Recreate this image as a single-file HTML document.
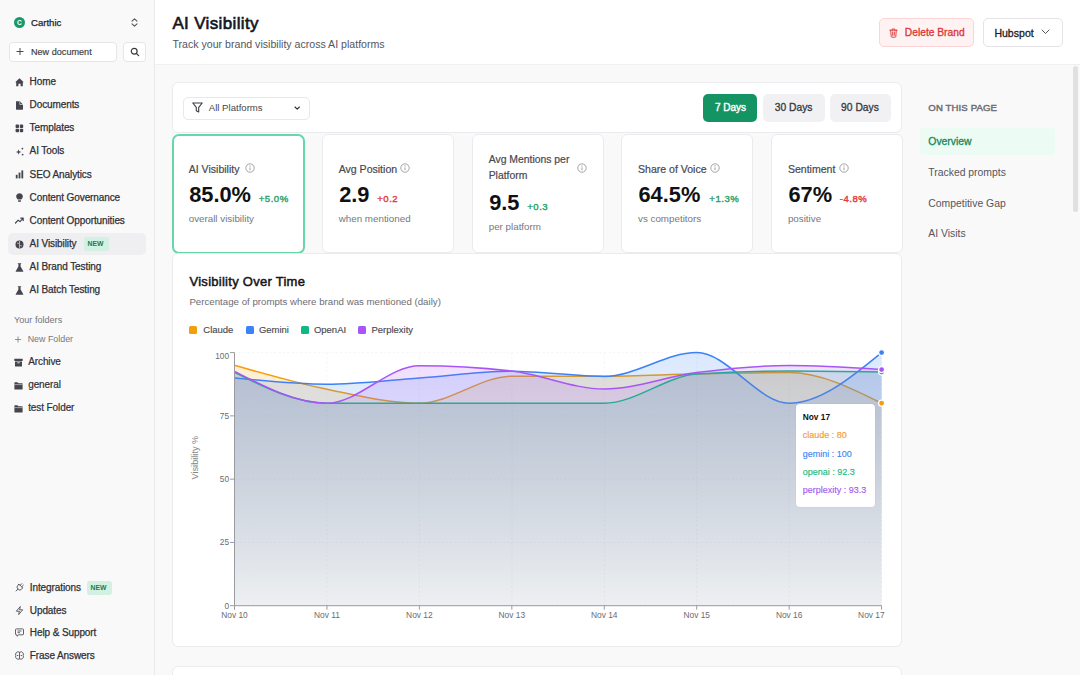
<!DOCTYPE html>
<html><head><meta charset="utf-8"><style>
html,body{margin:0;padding:0;width:1080px;height:675px;overflow:hidden;background:#f9f9fa;font-family:"Liberation Sans", sans-serif;}
.t{position:absolute;white-space:nowrap;}
.r{position:absolute;}
.i{position:absolute;overflow:visible;}
</style></head><body>
<div class="r" style="left:0px;top:0px;width:154px;height:675px;background:#f9f9fa;"></div>
<div class="r" style="left:154px;top:0px;width:1px;height:675px;background:#e9e9ee;"></div>
<div class="r" style="left:14px;top:17px;width:11px;height:11px;background:#17996a;border-radius:6px;"></div>
<div class="t" style="left:17.00px;top:19.61px;font-size:6.6px;line-height:6.6px;color:#fff;font-weight:700;">C</div>
<div class="t" style="left:31.00px;top:17.87px;font-size:9.6px;line-height:9.6px;color:#232329;-webkit-text-stroke:0.25px #232329;">Carthic</div>
<svg class="i" style="left:131px;top:18px;" width="7" height="9" viewBox="0 0 7 9"><path d="M1 3.2 L3.5 0.8 L6 3.2 M1 5.8 L3.5 8.2 L6 5.8" fill="none" stroke="#55555c" stroke-width="1.1" stroke-linecap="round" stroke-linejoin="round"/></svg>
<div class="r" style="left:9px;top:42px;width:108px;height:19.5px;background:#fff;box-sizing:border-box;border:1px solid #e6e6ea;border-radius:4px;"></div>
<svg class="i" style="left:16px;top:47px;" width="8" height="9" viewBox="0 0 8 9"><path d="M4 1 V8 M0.5 4.5 H7.5" fill="none" stroke="#4a4a52" stroke-width="1"/></svg>
<div class="t" style="left:31.00px;top:48.10px;font-size:9.1px;line-height:9.1px;color:#3a3a40;-webkit-text-stroke:0.15px #3a3a40;">New document</div>
<div class="r" style="left:123px;top:42px;width:23px;height:19.5px;background:#fff;box-sizing:border-box;border:1px solid #e6e6ea;border-radius:4px;"></div>
<svg class="i" style="left:130px;top:47px;" width="10" height="10" viewBox="0 0 10 10"><circle cx="4.2" cy="4.2" r="2.9" fill="none" stroke="#3a3a40" stroke-width="1.2"/><path d="M6.4 6.4 L8.6 8.6" stroke="#3a3a40" stroke-width="1.3" stroke-linecap="round"/></svg>
<div class="r" style="left:8px;top:233px;width:138px;height:22px;background:#efeff1;border-radius:5px;"></div>
<div class="t" style="left:29.60px;top:77.03px;font-size:10.0px;line-height:10.0px;color:#303036;letter-spacing:-0.1px;-webkit-text-stroke:0.25px #303036;">Home</div>
<svg class="i" style="left:14.5px;top:77.5px;" width="9" height="9" viewBox="0 0 9 9"><path d="M4.5 0.3 L8.8 4.2 L7.8 4.2 L7.8 8.2 L5.6 8.2 L5.6 5.8 L3.4 5.8 L3.4 8.2 L1.2 8.2 L1.2 4.2 L0.2 4.2 Z" fill="#45454d"/></svg>
<div class="t" style="left:29.60px;top:100.19px;font-size:10.0px;line-height:10.0px;color:#303036;letter-spacing:-0.1px;-webkit-text-stroke:0.25px #303036;">Documents</div>
<svg class="i" style="left:14.5px;top:100.65px;" width="9" height="9" viewBox="0 0 9 9"><path d="M1 0.3 H4.8 L8 3.5 V8.3 Q8 8.7 7.6 8.7 H1.4 Q1 8.7 1 8.3 Z" fill="#45454d"/><path d="M4.8 0.3 V3.5 H8" fill="none" stroke="#f9f9fa" stroke-width="0.6"/></svg>
<div class="t" style="left:29.60px;top:123.34px;font-size:10.0px;line-height:10.0px;color:#303036;letter-spacing:-0.1px;-webkit-text-stroke:0.25px #303036;">Templates</div>
<svg class="i" style="left:14.5px;top:123.80000000000001px;" width="9" height="9" viewBox="0 0 9 9"><rect x="0.6" y="0.6" width="3.4" height="3.4" rx="0.8" fill="#45454d"/><rect x="0.6" y="4.8" width="3.4" height="3.4" rx="0.8" fill="#45454d"/><rect x="4.8" y="0.6" width="3.4" height="3.4" rx="0.8" fill="#45454d"/><rect x="4.8" y="4.8" width="3.4" height="3.4" rx="0.8" fill="#45454d"/></svg>
<div class="t" style="left:29.60px;top:146.48px;font-size:10.0px;line-height:10.0px;color:#303036;letter-spacing:-0.1px;-webkit-text-stroke:0.25px #303036;">AI Tools</div>
<svg class="i" style="left:14.5px;top:146.95px;" width="9" height="9" viewBox="0 0 9 9"><path d="M3.6 2.2 L4.3 4.3 L6.4 5 L4.3 5.7 L3.6 7.8 L2.9 5.7 L0.8 5 L2.9 4.3 Z" fill="#45454d"/><circle cx="7.4" cy="1.6" r="0.9" fill="#45454d"/><circle cx="7.6" cy="7.6" r="0.9" fill="#45454d"/></svg>
<div class="t" style="left:29.60px;top:169.63px;font-size:10.0px;line-height:10.0px;color:#303036;letter-spacing:-0.1px;-webkit-text-stroke:0.25px #303036;">SEO Analytics</div>
<svg class="i" style="left:14.5px;top:170.1px;" width="9" height="9" viewBox="0 0 9 9"><rect x="0.8" y="4.8" width="1.8" height="3.6" fill="#45454d"/><rect x="3.6" y="2.6" width="1.8" height="5.8" fill="#45454d"/><rect x="6.4" y="0.4" width="1.8" height="8" fill="#45454d"/></svg>
<div class="t" style="left:29.60px;top:192.78px;font-size:10.0px;line-height:10.0px;color:#303036;letter-spacing:-0.1px;-webkit-text-stroke:0.25px #303036;">Content Governance</div>
<svg class="i" style="left:14.5px;top:193.25px;" width="9" height="9" viewBox="0 0 9 9"><path d="M4.5 0.2 A3.3 3.3 0 0 1 7.1 5.6 L6.2 6.6 H2.8 L1.9 5.6 A3.3 3.3 0 0 1 4.5 0.2 Z" fill="#45454d"/><rect x="3" y="7.2" width="3" height="1.5" rx="0.5" fill="#45454d"/></svg>
<div class="t" style="left:29.60px;top:215.93px;font-size:10.0px;line-height:10.0px;color:#303036;letter-spacing:-0.1px;-webkit-text-stroke:0.25px #303036;">Content Opportunities</div>
<svg class="i" style="left:14.5px;top:216.39999999999998px;" width="9" height="9" viewBox="0 0 9 9"><path d="M0.5 7 L3.2 4.2 L5 5.6 L8 2.3 M5.8 2.2 H8.2 V4.6" fill="none" stroke="#45454d" stroke-width="1.2" stroke-linecap="round" stroke-linejoin="round"/></svg>
<div class="t" style="left:29.60px;top:239.08px;font-size:10.0px;line-height:10.0px;color:#303036;letter-spacing:-0.1px;-webkit-text-stroke:0.25px #303036;">AI Visibility</div>
<svg class="i" style="left:14.5px;top:239.54999999999998px;" width="9" height="9" viewBox="0 0 9 9"><circle cx="4.5" cy="4.5" r="4" fill="#45454d"/><path d="M4.5 1 V8 M2 3 Q3.3 3.8 4.5 3.2 M7 6 Q5.7 5.2 4.5 5.8" fill="none" stroke="#efeff1" stroke-width="0.6"/></svg>
<div class="t" style="left:29.60px;top:262.24px;font-size:10.0px;line-height:10.0px;color:#303036;letter-spacing:-0.1px;-webkit-text-stroke:0.25px #303036;">AI Brand Testing</div>
<svg class="i" style="left:14.5px;top:262.7px;" width="9" height="9" viewBox="0 0 9 9"><path d="M2.8 0.3 H6.2 V1.1 H5.6 V3.6 L8.3 8.2 Q8.5 8.7 8 8.7 H1 Q0.5 8.7 0.7 8.2 L3.4 3.6 V1.1 H2.8 Z" fill="#45454d"/></svg>
<div class="t" style="left:29.60px;top:285.39px;font-size:10.0px;line-height:10.0px;color:#303036;letter-spacing:-0.1px;-webkit-text-stroke:0.25px #303036;">AI Batch Testing</div>
<svg class="i" style="left:14.5px;top:285.85px;" width="9" height="9" viewBox="0 0 9 9"><path d="M2.8 0.3 H6.2 V1.1 H5.6 V3.6 L8.3 8.2 Q8.5 8.7 8 8.7 H1 Q0.5 8.7 0.7 8.2 L3.4 3.6 V1.1 H2.8 Z" fill="#45454d"/></svg>
<div class="r" style="left:84px;top:237px;width:25px;height:13.5px;background:#d3f1e2;border-radius:3px;"></div>
<div class="t" style="left:87.40px;top:241.04px;font-size:6.8px;line-height:6.8px;color:#1b7a50;font-weight:700;letter-spacing:0.1px;">NEW</div>
<div class="t" style="left:14.00px;top:315.60px;font-size:9.1px;line-height:9.1px;color:#75757c;">Your folders</div>
<svg class="i" style="left:15px;top:336px;" width="6" height="7" viewBox="0 0 6 7"><path d="M3 0.5 V6.5 M0 3.5 H6" stroke="#85858c" stroke-width="0.9"/></svg>
<div class="t" style="left:27.70px;top:334.67px;font-size:8.9px;line-height:8.9px;color:#77777e;">New Folder</div>
<div class="t" style="left:28.20px;top:357.34px;font-size:10.0px;line-height:10.0px;color:#303036;letter-spacing:-0.1px;-webkit-text-stroke:0.2px #303036;">Archive</div>
<svg class="i" style="left:13.9px;top:357.8px;" width="9" height="9" viewBox="0 0 9 9"><rect x="0.3" y="0.8" width="8.4" height="2.2" rx="0.4" fill="#45454d"/><path d="M1 3.5 H8 V8 Q8 8.5 7.5 8.5 H1.5 Q1 8.5 1 8 Z" fill="#45454d"/><rect x="3.3" y="4.4" width="2.4" height="0.9" fill="#f9f9fa"/></svg>
<div class="t" style="left:28.20px;top:380.14px;font-size:10.0px;line-height:10.0px;color:#303036;letter-spacing:-0.1px;-webkit-text-stroke:0.2px #303036;">general</div>
<svg class="i" style="left:13.9px;top:380.6px;" width="9" height="9" viewBox="0 0 9 9"><path d="M0.4 1.8 Q0.4 1.3 0.9 1.3 H3.4 L4.4 2.3 H8.1 Q8.6 2.3 8.6 2.8 V7.9 Q8.6 8.4 8.1 8.4 H0.9 Q0.4 8.4 0.4 7.9 Z" fill="#45454d"/><path d="M0.4 3.6 H8.6" stroke="#f9f9fa" stroke-width="0.5"/></svg>
<div class="t" style="left:28.20px;top:403.34px;font-size:10.0px;line-height:10.0px;color:#303036;letter-spacing:-0.1px;-webkit-text-stroke:0.2px #303036;">test Folder</div>
<svg class="i" style="left:13.9px;top:403.8px;" width="9" height="9" viewBox="0 0 9 9"><path d="M0.4 1.8 Q0.4 1.3 0.9 1.3 H3.4 L4.4 2.3 H8.1 Q8.6 2.3 8.6 2.8 V7.9 Q8.6 8.4 8.1 8.4 H0.9 Q0.4 8.4 0.4 7.9 Z" fill="#45454d"/><path d="M0.4 3.6 H8.6" stroke="#f9f9fa" stroke-width="0.5"/></svg>
<div class="t" style="left:29.80px;top:583.03px;font-size:10.0px;line-height:10.0px;color:#303036;letter-spacing:-0.1px;-webkit-text-stroke:0.25px #303036;">Integrations</div>
<svg class="i" style="left:14.5px;top:583.0px;" width="9" height="9" viewBox="0 0 9 9"><g transform="rotate(45 4.5 4.5)"><path d="M3.4 0.2 V2.3 M5.6 0.2 V2.3 M1.9 2.5 H7.1 V4.6 Q7.1 6.6 5.1 6.6 H3.9 Q1.9 6.6 1.9 4.6 Z M4.5 6.6 V9.4" fill="none" stroke="#505058" stroke-width="0.9" stroke-linecap="round" stroke-linejoin="round"/></g></svg>
<div class="t" style="left:29.80px;top:605.74px;font-size:10.0px;line-height:10.0px;color:#303036;letter-spacing:-0.1px;-webkit-text-stroke:0.25px #303036;">Updates</div>
<svg class="i" style="left:14.5px;top:605.7px;" width="9" height="9" viewBox="0 0 9 9"><path d="M5.3 0.5 L1.3 5.2 H4.4 L3.7 8.6 L7.7 3.8 H4.6 Z" fill="none" stroke="#505058" stroke-width="0.9" stroke-linejoin="round"/></svg>
<div class="t" style="left:29.80px;top:628.13px;font-size:10.0px;line-height:10.0px;color:#303036;letter-spacing:-0.1px;-webkit-text-stroke:0.25px #303036;">Help &amp; Support</div>
<svg class="i" style="left:14.5px;top:628.1px;" width="9" height="9" viewBox="0 0 9 9"><path d="M1.2 0.9 H7.8 Q8.5 0.9 8.5 1.6 V6.1 Q8.5 6.8 7.8 6.8 H3.6 L2 8.3 V6.8 H1.2 Q0.5 6.8 0.5 6.1 V1.6 Q0.5 0.9 1.2 0.9 Z M2.5 3 H6.5 M2.5 4.7 H5" fill="none" stroke="#505058" stroke-width="0.9" stroke-linejoin="round"/></svg>
<div class="t" style="left:29.80px;top:650.53px;font-size:10.0px;line-height:10.0px;color:#303036;letter-spacing:-0.1px;-webkit-text-stroke:0.25px #303036;">Frase Answers</div>
<svg class="i" style="left:14.5px;top:650.5px;" width="9" height="9" viewBox="0 0 9 9"><path d="M4.5 1.3 Q2.5 0 1.3 1.6 Q0.1 3 0.8 4.5 Q0 6.3 1.5 7.6 Q3 8.8 4.5 7.8 Q6 8.8 7.5 7.6 Q9 6.3 8.2 4.5 Q8.9 3 7.7 1.6 Q6.5 0 4.5 1.3 Z M4.5 1.3 V7.8 M2 4.5 H3.3 M5.7 4.5 H7" fill="none" stroke="#505058" stroke-width="0.9" stroke-linejoin="round"/></svg>
<div class="r" style="left:87px;top:581px;width:25px;height:13.5px;background:#d3f1e2;border-radius:3px;"></div>
<div class="t" style="left:90.40px;top:585.04px;font-size:6.8px;line-height:6.8px;color:#1b7a50;font-weight:700;letter-spacing:0.1px;">NEW</div>
<div class="r" style="left:155px;top:0px;width:925px;height:64px;background:#fff;"></div>
<div class="r" style="left:155px;top:64px;width:925px;height:1px;background:#f0f0f3;"></div>
<div class="r" style="left:155px;top:65px;width:925px;height:610px;background:#f9f9fa;"></div>
<div class="t" style="left:172.40px;top:14.81px;font-size:17.0px;line-height:17.0px;color:#141418;letter-spacing:0.35px;-webkit-text-stroke:0.6px #141418;">AI Visibility</div>
<div class="t" style="left:172.50px;top:38.83px;font-size:10.6px;line-height:10.6px;color:#55555d;">Track your brand visibility across AI platforms</div>
<div class="r" style="left:879px;top:18px;width:95px;height:29px;background:#fef2f2;box-sizing:border-box;border:1px solid #fbd5d5;border-radius:5px;"></div>
<svg class="i" style="left:889px;top:27.5px;" width="9" height="10" viewBox="0 0 9 10"><path d="M0.8 2.2 H8.2 M3.2 2.2 V1 H5.8 V2.2 M1.7 2.2 L2.2 8.6 Q2.3 9.2 2.9 9.2 H6.1 Q6.7 9.2 6.8 8.6 L7.3 2.2 M3.7 4 V7.4 M5.3 4 V7.4" fill="none" stroke="#dc3b3b" stroke-width="0.95" stroke-linecap="round" stroke-linejoin="round"/></svg>
<div class="t" style="left:904.80px;top:27.72px;font-size:10.25px;line-height:10.25px;color:#dc3535;-webkit-text-stroke:0.3px #dc3535;">Delete Brand</div>
<div class="r" style="left:982.5px;top:18px;width:80.5px;height:29px;background:#fff;box-sizing:border-box;border:1px solid #e3e3e8;border-radius:5px;"></div>
<div class="t" style="left:994.40px;top:27.57px;font-size:10.55px;line-height:10.55px;color:#1c1c22;-webkit-text-stroke:0.3px #1c1c22;">Hubspot</div>
<svg class="i" style="left:1041px;top:29px;" width="9" height="6" viewBox="0 0 9 6"><path d="M1 1 L4.5 4.5 L8 1" fill="none" stroke="#55555c" stroke-width="1" stroke-linecap="round" stroke-linejoin="round"/></svg>
<div class="r" style="left:172px;top:82px;width:730px;height:50.5px;background:#fff;box-sizing:border-box;border:1px solid #ebebef;border-radius:6px;"></div>
<div class="r" style="left:183px;top:97px;width:127px;height:22.5px;background:#fff;box-sizing:border-box;border:1px solid #e8e8ec;border-radius:5px;"></div>
<svg class="i" style="left:191.5px;top:102px;" width="11" height="11" viewBox="0 0 11 11"><path d="M0.8 1 H10.2 L6.7 5.3 V10 L4.3 8.7 V5.3 Z" fill="none" stroke="#3d3d44" stroke-width="1.1" stroke-linejoin="round"/></svg>
<div class="t" style="left:208.80px;top:103.27px;font-size:9.6px;line-height:9.6px;color:#47474e;">All Platforms</div>
<svg class="i" style="left:293.8px;top:106px;" width="7" height="5" viewBox="0 0 7 5"><path d="M1 1 L3.2 3.2 L5.4 1" fill="none" stroke="#2c2c32" stroke-width="1.1" stroke-linecap="round" stroke-linejoin="round"/></svg>
<div class="r" style="left:703px;top:94px;width:54px;height:28px;background:#149462;border-radius:5px;"></div>
<div class="t" style="left:714.90px;top:103.44px;font-size:10.0px;line-height:10.0px;color:#fff;-webkit-text-stroke:0.4px #fff;">7 Days</div>
<div class="r" style="left:763px;top:94px;width:61.5px;height:28px;background:#f1f1f3;border-radius:5px;"></div>
<div class="t" style="left:774.70px;top:103.18px;font-size:10.3px;line-height:10.3px;color:#38383e;-webkit-text-stroke:0.3px #38383e;">30 Days</div>
<div class="r" style="left:830px;top:94px;width:61px;height:28px;background:#f1f1f3;border-radius:5px;"></div>
<div class="t" style="left:841.10px;top:103.18px;font-size:10.3px;line-height:10.3px;color:#38383e;-webkit-text-stroke:0.3px #38383e;">90 Days</div>
<div class="r" style="left:171.5px;top:133.5px;width:133px;height:120px;background:#fff;box-sizing:border-box;border:2px solid #66d7ab;border-radius:7px;"></div>
<div class="t" style="left:188.70px;top:163.67px;font-size:10.55px;line-height:10.55px;color:#48484f;-webkit-text-stroke:0.2px #48484f;">AI Visibility</div>
<svg class="i" style="left:245.2px;top:163px;" width="10" height="10" viewBox="0 0 10 10"><circle cx="5" cy="5" r="4.2" fill="none" stroke="#9a9aa0" stroke-width="0.9"/><path d="M5 4.4 V7.2" stroke="#9a9aa0" stroke-width="0.95"/><circle cx="5" cy="2.9" r="0.55" fill="#9a9aa0"/></svg>
<div class="t" style="left:189.20px;top:184.05px;font-size:21.8px;line-height:21.8px;color:#111114;font-weight:700;">85.0%</div>
<div class="t" style="left:258.70px;top:194.17px;font-size:9.6px;line-height:9.6px;color:#2aa36b;letter-spacing:0.5px;-webkit-text-stroke:0.4px #2aa36b;">+5.0%</div>
<div class="t" style="left:188.70px;top:213.90px;font-size:9.8px;line-height:9.8px;color:#77777e;">overall visibility</div>
<div class="r" style="left:321.5px;top:134px;width:132px;height:119px;background:#fff;box-sizing:border-box;border:1px solid #ebebef;border-radius:6px;"></div>
<div class="t" style="left:338.70px;top:163.67px;font-size:10.55px;line-height:10.55px;color:#48484f;-webkit-text-stroke:0.2px #48484f;">Avg Position</div>
<svg class="i" style="left:400.29999999999995px;top:163px;" width="10" height="10" viewBox="0 0 10 10"><circle cx="5" cy="5" r="4.2" fill="none" stroke="#9a9aa0" stroke-width="0.9"/><path d="M5 4.4 V7.2" stroke="#9a9aa0" stroke-width="0.95"/><circle cx="5" cy="2.9" r="0.55" fill="#9a9aa0"/></svg>
<div class="t" style="left:339.20px;top:184.05px;font-size:21.8px;line-height:21.8px;color:#111114;font-weight:700;">2.9</div>
<div class="t" style="left:377.20px;top:194.17px;font-size:9.6px;line-height:9.6px;color:#e23b3b;letter-spacing:0.5px;-webkit-text-stroke:0.4px #e23b3b;">+0.2</div>
<div class="t" style="left:338.70px;top:213.90px;font-size:9.8px;line-height:9.8px;color:#77777e;">when mentioned</div>
<div class="r" style="left:471.5px;top:134px;width:132px;height:119px;background:#fff;box-sizing:border-box;border:1px solid #ebebef;border-radius:6px;"></div>
<div class="t" style="left:488.70px;top:154.90px;font-size:10.4px;line-height:10.4px;color:#48484f;-webkit-text-stroke:0.2px #48484f;">Avg Mentions per</div>
<div class="t" style="left:488.70px;top:171.30px;font-size:10.4px;line-height:10.4px;color:#48484f;-webkit-text-stroke:0.2px #48484f;">Platform</div>
<svg class="i" style="left:576.5px;top:163px;" width="10" height="10" viewBox="0 0 10 10"><circle cx="5" cy="5" r="4.2" fill="none" stroke="#9a9aa0" stroke-width="0.9"/><path d="M5 4.4 V7.2" stroke="#9a9aa0" stroke-width="0.95"/><circle cx="5" cy="2.9" r="0.55" fill="#9a9aa0"/></svg>
<div class="t" style="left:489.20px;top:192.05px;font-size:21.8px;line-height:21.8px;color:#111114;font-weight:700;">9.5</div>
<div class="t" style="left:527.20px;top:202.17px;font-size:9.6px;line-height:9.6px;color:#2aa36b;letter-spacing:0.5px;-webkit-text-stroke:0.4px #2aa36b;">+0.3</div>
<div class="t" style="left:488.70px;top:222.00px;font-size:9.8px;line-height:9.8px;color:#77777e;">per platform</div>
<div class="r" style="left:620.8px;top:134px;width:132px;height:119px;background:#fff;box-sizing:border-box;border:1px solid #ebebef;border-radius:6px;"></div>
<div class="t" style="left:638.00px;top:163.67px;font-size:10.55px;line-height:10.55px;color:#48484f;-webkit-text-stroke:0.2px #48484f;">Share of Voice</div>
<svg class="i" style="left:710.2px;top:163px;" width="10" height="10" viewBox="0 0 10 10"><circle cx="5" cy="5" r="4.2" fill="none" stroke="#9a9aa0" stroke-width="0.9"/><path d="M5 4.4 V7.2" stroke="#9a9aa0" stroke-width="0.95"/><circle cx="5" cy="2.9" r="0.55" fill="#9a9aa0"/></svg>
<div class="t" style="left:638.50px;top:184.05px;font-size:21.8px;line-height:21.8px;color:#111114;font-weight:700;">64.5%</div>
<div class="t" style="left:709.30px;top:194.17px;font-size:9.6px;line-height:9.6px;color:#2aa36b;letter-spacing:0.5px;-webkit-text-stroke:0.4px #2aa36b;">+1.3%</div>
<div class="t" style="left:638.00px;top:213.90px;font-size:9.8px;line-height:9.8px;color:#77777e;">vs competitors</div>
<div class="r" style="left:770.7px;top:134px;width:132px;height:119px;background:#fff;box-sizing:border-box;border:1px solid #ebebef;border-radius:6px;"></div>
<div class="t" style="left:787.90px;top:163.67px;font-size:10.55px;line-height:10.55px;color:#48484f;-webkit-text-stroke:0.2px #48484f;">Sentiment</div>
<svg class="i" style="left:839.4000000000001px;top:163px;" width="10" height="10" viewBox="0 0 10 10"><circle cx="5" cy="5" r="4.2" fill="none" stroke="#9a9aa0" stroke-width="0.9"/><path d="M5 4.4 V7.2" stroke="#9a9aa0" stroke-width="0.95"/><circle cx="5" cy="2.9" r="0.55" fill="#9a9aa0"/></svg>
<div class="t" style="left:788.40px;top:184.05px;font-size:21.8px;line-height:21.8px;color:#111114;font-weight:700;">67%</div>
<div class="t" style="left:839.80px;top:194.17px;font-size:9.6px;line-height:9.6px;color:#e23b3b;letter-spacing:0.5px;-webkit-text-stroke:0.4px #e23b3b;">-4.8%</div>
<div class="t" style="left:787.90px;top:213.90px;font-size:9.8px;line-height:9.8px;color:#77777e;">positive</div>
<div class="r" style="left:172px;top:253px;width:730px;height:394px;background:#fff;box-sizing:border-box;border:1px solid #ebebef;border-radius:6px;"></div>
<div class="t" style="left:189.50px;top:274.80px;font-size:13.0px;line-height:13.0px;color:#16161a;letter-spacing:0.27px;-webkit-text-stroke:0.5px #16161a;">Visibility Over Time</div>
<div class="t" style="left:189.40px;top:296.59px;font-size:9.7px;line-height:9.7px;color:#6d6d74;">Percentage of prompts where brand was mentioned (daily)</div>
<div class="r" style="left:189.4px;top:326px;width:8px;height:8px;background:#f59e0b;border-radius:1.5px;"></div>
<div class="t" style="left:203.30px;top:324.96px;font-size:9.5px;line-height:9.5px;color:#4a4a51;-webkit-text-stroke:0.15px #4a4a51;">Claude</div>
<div class="r" style="left:245.6px;top:326px;width:8px;height:8px;background:#3b82f6;border-radius:1.5px;"></div>
<div class="t" style="left:258.90px;top:324.96px;font-size:9.5px;line-height:9.5px;color:#4a4a51;-webkit-text-stroke:0.15px #4a4a51;">Gemini</div>
<div class="r" style="left:300.6px;top:326px;width:8px;height:8px;background:#10b981;border-radius:1.5px;"></div>
<div class="t" style="left:313.90px;top:324.96px;font-size:9.5px;line-height:9.5px;color:#4a4a51;-webkit-text-stroke:0.15px #4a4a51;">OpenAI</div>
<div class="r" style="left:358px;top:326px;width:8px;height:8px;background:#a855f7;border-radius:1.5px;"></div>
<div class="t" style="left:371.40px;top:324.96px;font-size:9.5px;line-height:9.5px;color:#4a4a51;-webkit-text-stroke:0.15px #4a4a51;">Perplexity</div>
<svg class="i" style="left:0;top:0" width="1080" height="675" viewBox="0 0 1080 675"><defs><linearGradient id="g_claude" x1="0" y1="0" x2="0" y2="1"><stop offset="0" stop-color="#f59e0b" stop-opacity="0.18"/><stop offset="1" stop-color="#f59e0b" stop-opacity="0.035"/></linearGradient><linearGradient id="g_gemini" x1="0" y1="0" x2="0" y2="1"><stop offset="0" stop-color="#3b82f6" stop-opacity="0.18"/><stop offset="1" stop-color="#3b82f6" stop-opacity="0.035"/></linearGradient><linearGradient id="g_openai" x1="0" y1="0" x2="0" y2="1"><stop offset="0" stop-color="#10b981" stop-opacity="0.18"/><stop offset="1" stop-color="#10b981" stop-opacity="0.035"/></linearGradient><linearGradient id="g_perplexity" x1="0" y1="0" x2="0" y2="1"><stop offset="0" stop-color="#a855f7" stop-opacity="0.18"/><stop offset="1" stop-color="#a855f7" stop-opacity="0.035"/></linearGradient></defs><line x1="234.5" x2="881.6" y1="605.70" y2="605.70" stroke="#f1f1f3" stroke-dasharray="2.2 2.2" stroke-width="0.8"/><line x1="234.5" x2="881.6" y1="542.43" y2="542.43" stroke="#f1f1f3" stroke-dasharray="2.2 2.2" stroke-width="0.8"/><line x1="234.5" x2="881.6" y1="479.15" y2="479.15" stroke="#f1f1f3" stroke-dasharray="2.2 2.2" stroke-width="0.8"/><line x1="234.5" x2="881.6" y1="415.88" y2="415.88" stroke="#f1f1f3" stroke-dasharray="2.2 2.2" stroke-width="0.8"/><line x1="234.5" x2="881.6" y1="352.60" y2="352.60" stroke="#f1f1f3" stroke-dasharray="2.2 2.2" stroke-width="0.8"/><line x1="234.50" x2="234.50" y1="352.6" y2="605.7" stroke="#f1f1f3" stroke-dasharray="2.2 2.2" stroke-width="0.8"/><line x1="326.94" x2="326.94" y1="352.6" y2="605.7" stroke="#f1f1f3" stroke-dasharray="2.2 2.2" stroke-width="0.8"/><line x1="419.39" x2="419.39" y1="352.6" y2="605.7" stroke="#f1f1f3" stroke-dasharray="2.2 2.2" stroke-width="0.8"/><line x1="511.83" x2="511.83" y1="352.6" y2="605.7" stroke="#f1f1f3" stroke-dasharray="2.2 2.2" stroke-width="0.8"/><line x1="604.27" x2="604.27" y1="352.6" y2="605.7" stroke="#f1f1f3" stroke-dasharray="2.2 2.2" stroke-width="0.8"/><line x1="696.71" x2="696.71" y1="352.6" y2="605.7" stroke="#f1f1f3" stroke-dasharray="2.2 2.2" stroke-width="0.8"/><line x1="789.16" x2="789.16" y1="352.6" y2="605.7" stroke="#f1f1f3" stroke-dasharray="2.2 2.2" stroke-width="0.8"/><line x1="881.60" x2="881.60" y1="352.6" y2="605.7" stroke="#f1f1f3" stroke-dasharray="2.2 2.2" stroke-width="0.8"/><path d="M234.50,365.25C265.31,374.11 296.13,382.97 326.94,389.30C357.76,395.63 388.57,403.22 419.39,403.22C450.20,403.22 481.01,376.14 511.83,376.14C542.64,376.14 573.46,376.14 604.27,376.14C635.09,376.14 665.90,374.45 696.71,373.86C727.53,373.27 758.34,372.59 789.16,372.59C819.97,372.59 850.79,387.91 881.60,403.22L881.60,605.70L234.50,605.70Z" fill="url(#g_claude)" stroke="none"/><path d="M234.50,365.25C265.31,374.11 296.13,382.97 326.94,389.30C357.76,395.63 388.57,403.22 419.39,403.22C450.20,403.22 481.01,376.14 511.83,376.14C542.64,376.14 573.46,376.14 604.27,376.14C635.09,376.14 665.90,374.45 696.71,373.86C727.53,373.27 758.34,372.59 789.16,372.59C819.97,372.59 850.79,387.91 881.60,403.22" fill="none" stroke="#f59e0b" stroke-width="1.5"/><path d="M234.50,377.91C265.31,381.07 296.13,384.24 326.94,384.24C357.76,384.24 388.57,380.06 419.39,377.91C450.20,375.76 481.01,371.33 511.83,371.33C542.64,371.33 573.46,376.39 604.27,376.39C635.09,376.39 665.90,352.60 696.71,352.60C727.53,352.60 758.34,403.22 789.16,403.22C819.97,403.22 850.79,377.91 881.60,352.60L881.60,605.70L234.50,605.70Z" fill="url(#g_gemini)" stroke="none"/><path d="M234.50,377.91C265.31,381.07 296.13,384.24 326.94,384.24C357.76,384.24 388.57,380.06 419.39,377.91C450.20,375.76 481.01,371.33 511.83,371.33C542.64,371.33 573.46,376.39 604.27,376.39C635.09,376.39 665.90,352.60 696.71,352.60C727.53,352.60 758.34,403.22 789.16,403.22C819.97,403.22 850.79,377.91 881.60,352.60" fill="none" stroke="#3b82f6" stroke-width="1.5"/><path d="M234.50,372.34C265.31,387.78 296.13,403.22 326.94,403.22C357.76,403.22 388.57,403.22 419.39,403.22C450.20,403.22 481.01,403.22 511.83,403.22C542.64,403.22 573.46,403.22 604.27,403.22C635.09,403.22 665.90,376.14 696.71,374.11C727.53,372.09 758.34,371.08 789.16,371.08C819.97,371.08 850.79,371.58 881.60,372.09L881.60,605.70L234.50,605.70Z" fill="url(#g_openai)" stroke="none"/><path d="M234.50,372.34C265.31,387.78 296.13,403.22 326.94,403.22C357.76,403.22 388.57,403.22 419.39,403.22C450.20,403.22 481.01,403.22 511.83,403.22C542.64,403.22 573.46,403.22 604.27,403.22C635.09,403.22 665.90,376.14 696.71,374.11C727.53,372.09 758.34,371.08 789.16,371.08C819.97,371.08 850.79,371.58 881.60,372.09" fill="none" stroke="#10b981" stroke-width="1.5"/><path d="M234.50,371.33C265.31,387.27 296.13,403.22 326.94,403.22C357.76,403.22 388.57,365.76 419.39,365.76C450.20,365.76 481.01,367.53 511.83,371.08C542.64,374.62 573.46,389.05 604.27,389.05C635.09,389.05 665.90,376.52 696.71,372.59C727.53,368.67 758.34,365.51 789.16,365.51C819.97,365.51 850.79,367.53 881.60,369.56L881.60,605.70L234.50,605.70Z" fill="url(#g_perplexity)" stroke="none"/><path d="M234.50,371.33C265.31,387.27 296.13,403.22 326.94,403.22C357.76,403.22 388.57,365.76 419.39,365.76C450.20,365.76 481.01,367.53 511.83,371.08C542.64,374.62 573.46,389.05 604.27,389.05C635.09,389.05 665.90,376.52 696.71,372.59C727.53,368.67 758.34,365.51 789.16,365.51C819.97,365.51 850.79,367.53 881.60,369.56" fill="none" stroke="#a855f7" stroke-width="1.5"/><path d="M234.5,352.6 V605.7 H881.6" fill="none" stroke="#9a9aa0" stroke-width="1"/><line x1="230.0" x2="234.5" y1="605.70" y2="605.70" stroke="#9a9aa0" stroke-width="1"/><line x1="230.0" x2="234.5" y1="542.43" y2="542.43" stroke="#9a9aa0" stroke-width="1"/><line x1="230.0" x2="234.5" y1="479.15" y2="479.15" stroke="#9a9aa0" stroke-width="1"/><line x1="230.0" x2="234.5" y1="415.88" y2="415.88" stroke="#9a9aa0" stroke-width="1"/><line x1="230.0" x2="234.5" y1="352.60" y2="352.60" stroke="#9a9aa0" stroke-width="1"/><line x1="234.50" x2="234.50" y1="605.7" y2="609.7" stroke="#9a9aa0" stroke-width="1"/><line x1="326.94" x2="326.94" y1="605.7" y2="609.7" stroke="#9a9aa0" stroke-width="1"/><line x1="419.39" x2="419.39" y1="605.7" y2="609.7" stroke="#9a9aa0" stroke-width="1"/><line x1="511.83" x2="511.83" y1="605.7" y2="609.7" stroke="#9a9aa0" stroke-width="1"/><line x1="604.27" x2="604.27" y1="605.7" y2="609.7" stroke="#9a9aa0" stroke-width="1"/><line x1="696.71" x2="696.71" y1="605.7" y2="609.7" stroke="#9a9aa0" stroke-width="1"/><line x1="789.16" x2="789.16" y1="605.7" y2="609.7" stroke="#9a9aa0" stroke-width="1"/><line x1="881.60" x2="881.60" y1="605.7" y2="609.7" stroke="#9a9aa0" stroke-width="1"/><circle cx="881.6" cy="403.22" r="3" fill="#f59e0b" stroke="#fff" stroke-width="1.2"/><circle cx="881.6" cy="352.60" r="3" fill="#3b82f6" stroke="#fff" stroke-width="1.2"/><circle cx="881.6" cy="372.09" r="3" fill="#10b981" stroke="#fff" stroke-width="1.2"/><circle cx="881.6" cy="369.56" r="3" fill="#a855f7" stroke="#fff" stroke-width="1.2"/></svg>
<div class="t" style="left:150px;width:79px;text-align:right;top:601.57px;font-size:8.3px;line-height:8.3px;color:#6b6b72">0</div>
<div class="t" style="left:150px;width:79px;text-align:right;top:538.30px;font-size:8.3px;line-height:8.3px;color:#6b6b72">25</div>
<div class="t" style="left:150px;width:79px;text-align:right;top:475.02px;font-size:8.3px;line-height:8.3px;color:#6b6b72">50</div>
<div class="t" style="left:150px;width:79px;text-align:right;top:411.75px;font-size:8.3px;line-height:8.3px;color:#6b6b72">75</div>
<div class="t" style="left:150px;width:79px;text-align:right;top:351.67px;font-size:8.3px;line-height:8.3px;color:#6b6b72">100</div>
<div class="t" style="left:204.50px;width:60px;text-align:center;top:610.69px;font-size:8.4px;line-height:8.4px;color:#6b6b72">Nov 10</div>
<div class="t" style="left:296.94px;width:60px;text-align:center;top:610.69px;font-size:8.4px;line-height:8.4px;color:#6b6b72">Nov 11</div>
<div class="t" style="left:389.39px;width:60px;text-align:center;top:610.69px;font-size:8.4px;line-height:8.4px;color:#6b6b72">Nov 12</div>
<div class="t" style="left:481.83px;width:60px;text-align:center;top:610.69px;font-size:8.4px;line-height:8.4px;color:#6b6b72">Nov 13</div>
<div class="t" style="left:574.27px;width:60px;text-align:center;top:610.69px;font-size:8.4px;line-height:8.4px;color:#6b6b72">Nov 14</div>
<div class="t" style="left:666.71px;width:60px;text-align:center;top:610.69px;font-size:8.4px;line-height:8.4px;color:#6b6b72">Nov 15</div>
<div class="t" style="left:759.16px;width:60px;text-align:center;top:610.69px;font-size:8.4px;line-height:8.4px;color:#6b6b72">Nov 16</div>
<div class="t" style="left:841.40px;width:60px;text-align:center;top:610.69px;font-size:8.4px;line-height:8.4px;color:#6b6b72">Nov 17</div>
<div class="t" style="left:166.2px;width:60px;text-align:center;top:453.0px;font-size:9.2px;line-height:9.2px;color:#85858c;transform:rotate(-90deg)">Visibility %</div>
<div class="r" style="left:796px;top:403.5px;width:78.5px;height:103.5px;background:#fff;border-radius:4px;box-shadow:0 0 0 0.5px rgba(0,0,0,0.04);"></div>
<div class="t" style="left:802.80px;top:413.17px;font-size:8.3px;line-height:8.3px;color:#111;font-weight:700;">Nov 17</div>
<div class="t" style="left:802.80px;top:431.38px;font-size:9.0px;line-height:9.0px;color:#f39c28;-webkit-text-stroke:0.15px #f39c28;">claude : 80</div>
<div class="t" style="left:802.80px;top:449.68px;font-size:9.0px;line-height:9.0px;color:#3f86f2;-webkit-text-stroke:0.15px #3f86f2;">gemini : 100</div>
<div class="t" style="left:802.80px;top:467.88px;font-size:9.0px;line-height:9.0px;color:#20b97f;-webkit-text-stroke:0.15px #20b97f;">openai : 92.3</div>
<div class="t" style="left:802.80px;top:486.38px;font-size:9.0px;line-height:9.0px;color:#a65af0;-webkit-text-stroke:0.15px #a65af0;">perplexity : 93.3</div>
<div class="r" style="left:172px;top:665.5px;width:730px;height:30px;background:#fff;box-sizing:border-box;border:1px solid #ebebef;border-radius:6px;"></div>
<div class="t" style="left:928.30px;top:103.07px;font-size:9.6px;line-height:9.6px;color:#6e6e75;letter-spacing:0.12px;-webkit-text-stroke:0.45px #6e6e75;">ON THIS PAGE</div>
<div class="r" style="left:919.5px;top:127.5px;width:135.5px;height:27.5px;background:#ecfbf3;border-radius:4px;"></div>
<div class="t" style="left:928.30px;top:137.00px;font-size:10.4px;line-height:10.4px;color:#178a5b;-webkit-text-stroke:0.3px #178a5b;">Overview</div>
<div class="t" style="left:928.30px;top:167.90px;font-size:10.4px;line-height:10.4px;color:#55555c;">Tracked prompts</div>
<div class="t" style="left:928.30px;top:198.70px;font-size:10.4px;line-height:10.4px;color:#55555c;">Competitive Gap</div>
<div class="t" style="left:928.30px;top:229.30px;font-size:10.4px;line-height:10.4px;color:#55555c;">AI Visits</div>
<div class="r" style="left:1072.8px;top:66.2px;width:5.3px;height:146px;background:#e0e0e2;border-radius:3px;"></div>
</body></html>
